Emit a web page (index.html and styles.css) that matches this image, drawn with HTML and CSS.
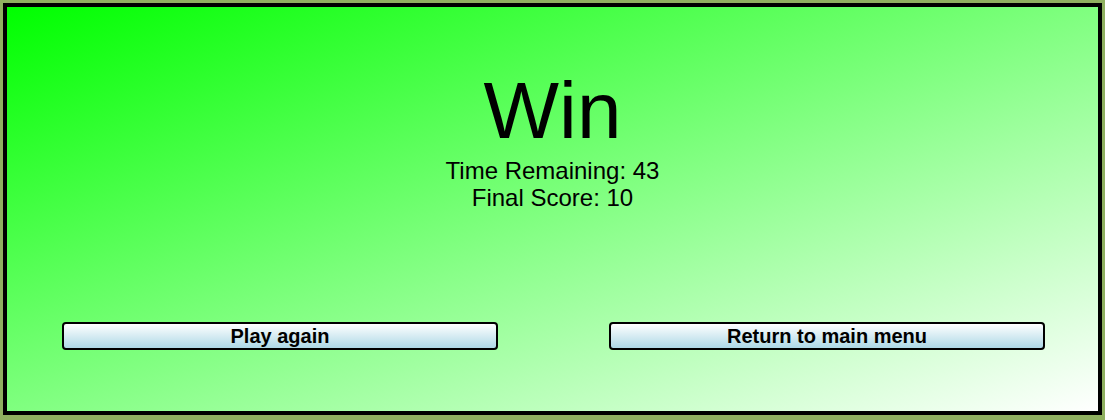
FILE: index.html
```html
<!DOCTYPE html>
<html>
<head>
<meta charset="utf-8">
<link rel="stylesheet" href="styles.css">
</head>
<body>
<div class="frame">
  <div class="result">
    <h1 class="title">Win</h1>
    <div class="stat">Time Remaining: 43</div>
    <div class="stat">Final Score: 10</div>
  </div>
  <div class="actions">
    <button class="btn">Play again</button>
    <button class="btn">Return to main menu</button>
  </div>
</div>
</body>
</html>
```
FILE: styles.css
```css
html, body {
  margin: 0;
  padding: 0;
  background: #8fb060;
  font-family: "Liberation Sans", Arial, sans-serif;
}
.frame {
  box-sizing: border-box;
  width: 1099px;
  height: 412px;
  margin: 3px 0 0 3px;
  border: 4px solid #000;
  background: linear-gradient(to bottom right, #00ff00, #ffffff);
  display: flex;
  flex-direction: column;
}
.result {
  display: flex;
  flex-direction: column;
  align-items: center;
  padding-top: 58px;
  color: #000;
}
.title {
  margin: 0;
  font-size: 80px;
  font-weight: normal;
  line-height: 92px;
}
.stat {
  font-size: 24px;
  line-height: 27px;
}
.actions {
  display: flex;
  margin-top: 111px;
  padding-left: 55px;
  gap: 111px;
}
.btn {
  box-sizing: border-box;
  width: 436px;
  height: 28px;
  padding: 0;
  border: 2px solid #000;
  border-radius: 4px;
  background: linear-gradient(#ffffff, #add8e6);
  font-family: "Liberation Sans", Arial, sans-serif;
  font-weight: bold;
  font-size: 20px;
  line-height: 22px;
  color: #000;
}
```
